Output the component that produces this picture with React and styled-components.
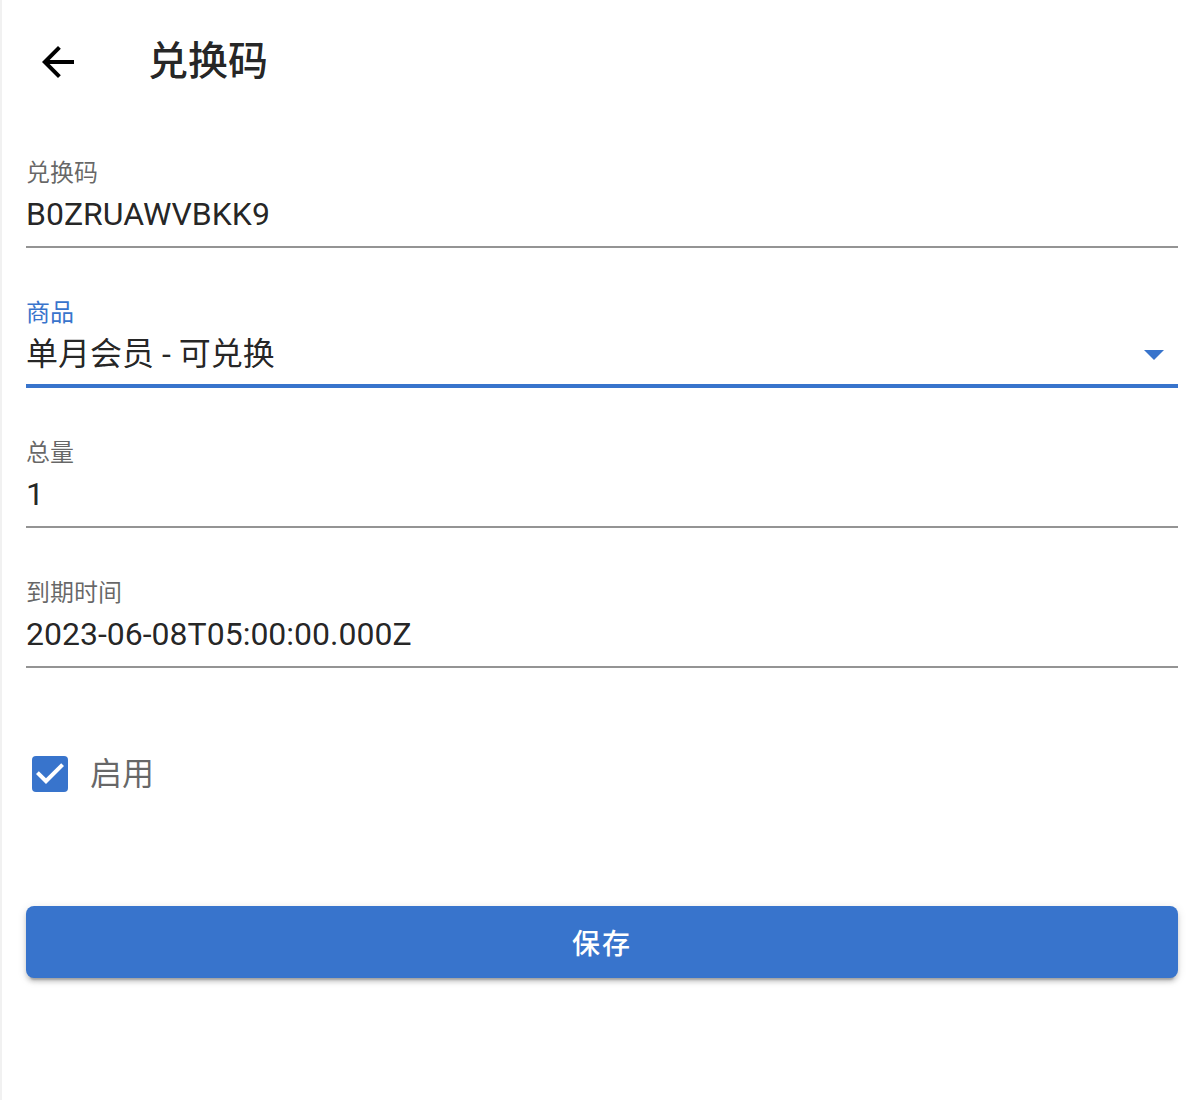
import React from "react";
import styled, { createGlobalStyle } from "styled-components";

const Global = createGlobalStyle`
  html, body { margin: 0; padding: 0; background: #fff; }
  body { font-family: Roboto, "Noto Sans CJK SC", sans-serif; color: rgba(0,0,0,0.87); }
  * { box-sizing: border-box; }
`;

const Page = styled.div`
  width: 1200px;
  min-height: 1100px;
  border-left: 2px solid #f1f1f1;
  padding: 0 22px 0 24px;
  background: #fff;
`;

const Header = styled.header`
  height: 124px;
  display: flex;
  align-items: center;
  padding-left: 8px;
  gap: 66px;
`;

const BackIcon = styled.svg`
  width: 48px;
  height: 48px;
  fill: #000;
  flex: none;
`;

const Title = styled.h1`
  margin: 0;
  font-size: 40px;
  font-weight: 500;
  color: rgba(0,0,0,0.87);
  font-family: Roboto, "Noto Sans CJK SC", sans-serif;
  line-height: 1;
`;

const Form = styled.div`
  display: flex;
  flex-direction: column;
  gap: 51px;
  padding-top: 35px;
`;

const Field = styled.div`
  display: flex;
  flex-direction: column;
`;

const Label = styled.label`
  font-size: 24px;
  line-height: 28px;
  height: 28px;
  color: ${p => (p.$focused ? "#3874cc" : "rgba(0,0,0,0.6)")};
`;

const ValueRow = styled.div`
  margin-top: 4px;
  height: 46px;
  line-height: 46px;
  font-size: 32px;
  color: rgba(0,0,0,0.87);
  display: flex;
  align-items: center;
  justify-content: space-between;
  box-sizing: content-box;
  padding-bottom: ${p => (p.$focused ? "7px" : "9px")};
  border-bottom: ${p => (p.$focused ? "4px solid #3874cc" : "2px solid #949494")};
`;

const Caret = styled.span`
  width: 0;
  height: 0;
  border-left: 10px solid transparent;
  border-right: 10px solid transparent;
  border-top: 10px solid #3874cc;
  margin-right: 14px;
  margin-top: 2px;
`;

const CheckRow = styled.label`
  display: flex;
  align-items: center;
  gap: 16px;
  margin-top: 82px;
  height: 48px;
`;

const CheckIcon = styled.svg`
  width: 48px;
  height: 48px;
  flex: none;
`;

const CheckText = styled.span`
  font-size: 32px;
  line-height: 40px;
  padding-bottom: 1px;
  color: rgba(0,0,0,0.6);
`;

const SaveButton = styled.button`
  display: block;
  width: 100%;
  height: 72px;
  margin-top: 108px;
  border: none;
  border-radius: 8px;
  background: #3874cc;
  color: #fff;
  font-family: Roboto, "Noto Sans CJK SC", sans-serif;
  font-size: 28px;
  font-weight: 500;
  letter-spacing: 2px;
  box-shadow: 0 6px 2px -4px rgba(0,0,0,0.2), 0 4px 4px 0 rgba(0,0,0,0.14), 0 2px 10px 0 rgba(0,0,0,0.12);
  cursor: pointer;
`;

function TextField({ label, value, focused, select }) {
  return (
    <Field>
      <Label $focused={focused}>{label}</Label>
      <ValueRow $focused={focused}>
        <span>{value}</span>
        {select && <Caret />}
      </ValueRow>
    </Field>
  );
}

export default function App() {
  return (
    <>
      <Global />
      <Page>
        <Header>
          <BackIcon viewBox="0 0 24 24">
            <path d="M20 11H7.83l5.59-5.59L12 4l-8 8 8 8 1.41-1.41L7.83 13H20v-2z" />
          </BackIcon>
          <Title>兑换码</Title>
        </Header>
        <Form>
          <TextField label="兑换码" value="B0ZRUAWVBKK9" />
          <TextField label="商品" value="单月会员 - 可兑换" focused select />
          <TextField label="总量" value="1" />
          <TextField label="到期时间" value="2023-06-08T05:00:00.000Z" />
        </Form>
        <CheckRow>
          <CheckIcon viewBox="0 0 24 24">
            <rect x="3" y="3" width="18" height="18" rx="2" fill="#3874cc" />
            <path d="M10 17l-5-5 1.41-1.41L10 14.17l7.59-7.59L19 8l-9 9z" fill="#fff" />
          </CheckIcon>
          <CheckText>启用</CheckText>
        </CheckRow>
        <SaveButton>保存</SaveButton>
      </Page>
    </>
  );
}
